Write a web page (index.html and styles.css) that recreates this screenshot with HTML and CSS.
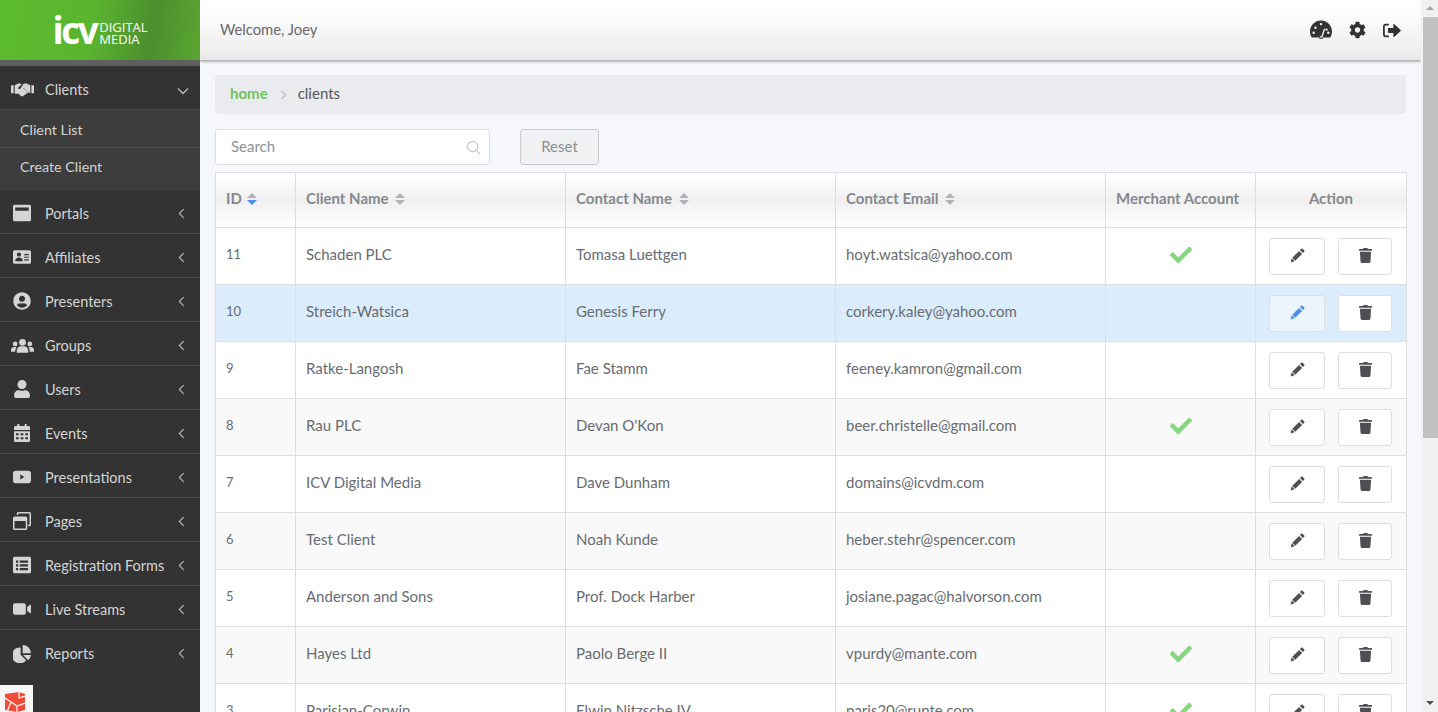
FILE: index.html
```html
<!DOCTYPE html>
<html lang="en">
    <head>
        <meta charset="UTF-8">
        <title>Clients - ICV Digital Media</title>
        <meta content="width=device-width" name="viewport">
        <link rel="stylesheet" href="styles.css">
    </head>
    <body>
        <svg class="defs" aria-hidden="true">
            <symbol id="i-hands" viewBox="0 0 44 28">
                <path d="M0 6h5v15H0zM39 6h5v15h-5z"/>
                <path d="M7 6l8-4 6 2-7 6c-1 2 1 4 3 3l5-3 10 9c1 2-1 3-3 3l-2 2-2 1-2 2h-3l-6-5H7z"/>
                <path d="M24 3l5-1 8 4v14h-3l-10-9-5 3c-1 0-2-1-1-2z"/>
            </symbol>
            <symbol id="i-window" viewBox="0 0 24 24">
                <path fill-rule="evenodd" d="M2 1h20a2 2 0 0 1 2 2v18a2 2 0 0 1-2 2H2a2 2 0 0 1-2-2V3a2 2 0 0 1 2-2zm1 3.500v4.500h18V4.500z"/>
            </symbol>
            <symbol id="i-card" viewBox="0 0 24 20">
                <path fill-rule="evenodd" d="M2 1h20a2 2 0 0 1 2 2v14a2 2 0 0 1-2 2H2a2 2 0 0 1-2-2V3a2 2 0 0 1 2-2zm6 3a2.800 2.800 0 1 0 0 5.600A2.800 2.800 0 0 0 8 4zM3 15.500h10c0-3-2-4.700-5-4.700s-5 1.700-5 4.700zM15 6v1.600h6V6zm0 3.500v1.600h6V9.500zm0 3.500v1.600h6V13z"/>
            </symbol>
            <symbol id="i-user-circle" viewBox="0 0 496 512">
                <path d="M248 8C111 8 0 119 0 256s111 248 248 248 248-111 248-248S385 8 248 8zm0 96c48.600 0 88 39.400 88 88s-39.400 88-88 88-88-39.400-88-88 39.400-88 88-88zm0 344c-58.700 0-111.300-26.600-146.500-68.200 18.800-35.400 55.600-59.800 98.500-59.800 2.400 0 4.800.400 7.100 1.100 13 4.200 26.600 6.900 40.900 6.900 14.300 0 28-2.700 40.900-6.900 2.300-.700 4.700-1.100 7.100-1.100 42.900 0 79.700 24.400 98.500 59.800C359.300 421.400 306.700 448 248 448z"/>
            </symbol>
            <symbol id="i-users" viewBox="0 0 44 28">
                <circle cx="22" cy="8" r="6.500"/>
                <path d="M11 28v-4c0-5 4-8.500 8-8.500h6c4 0 8 3.500 8 8.500v4z"/>
                <circle cx="8" cy="11" r="4.500"/>
                <circle cx="36" cy="11" r="4.500"/>
                <path d="M0 26v-3c0-4 3-6 5-6h6c-2 2-3 5-3 9zM44 26v-3c0-4-3-6-5-6h-6c2 2 3 5 3 9z"/>
            </symbol>
            <symbol id="i-user" viewBox="0 0 448 512">
                <path d="M224 256c70.700 0 128-57.300 128-128S294.700 0 224 0 96 57.300 96 128s57.300 128 128 128zm89.600 32h-16.700c-22.200 10.200-46.900 16-72.900 16s-50.600-5.800-72.900-16h-16.700C60.200 288 0 348.200 0 422.400V464c0 26.500 21.500 48 48 48h352c26.500 0 48-21.500 48-48v-41.600c0-74.200-60.200-134.400-134.400-134.400z"/>
            </symbol>
            <symbol id="i-calendar" viewBox="0 0 24 27">
                <path fill-rule="evenodd" d="M5 0h3v3h8V0h3v3h3a2 2 0 0 1 2 2v4H0V5a2 2 0 0 1 2-2h3zM0 11h24v14a2 2 0 0 1-2 2H2a2 2 0 0 1-2-2zm3 3v3h4v-3zm7 0v3h4v-3zm7 0v3h4v-3zM3 20v3h4v-3zm7 0v3h4v-3zm7 0v3h4v-3z"/>
            </symbol>
            <symbol id="i-youtube" viewBox="0 0 26 20">
                <path fill-rule="evenodd" d="M4 1h18a4 4 0 0 1 4 4v10a4 4 0 0 1-4 4H4a4 4 0 0 1-4-4V5a4 4 0 0 1 4-4zm6.500 5.500v7l6-3.500z"/>
            </symbol>
            <symbol id="i-pages" viewBox="0 0 24 24">
                <path fill-rule="evenodd" d="M7 0h15a2 2 0 0 1 2 2v15a2 2 0 0 1-2 2h-2v-2h2V2H7v2H5V2a2 2 0 0 1 2-2zM2 6h15a2 2 0 0 1 2 2v14a2 2 0 0 1-2 2H2a2 2 0 0 1-2-2V8a2 2 0 0 1 2-2zm0 6v10h15V12z"/>
            </symbol>
            <symbol id="i-list" viewBox="0 0 24 24">
                <path fill-rule="evenodd" d="M2 1h20a2 2 0 0 1 2 2v18a2 2 0 0 1-2 2H2a2 2 0 0 1-2-2V3a2 2 0 0 1 2-2zm2 5v3h3V6zm5 0v3h11V6zm-5 5v3h3v-3zm5 0v3h11v-3zm-5 5v3h3v-3zm5 0v3h11v-3z"/>
            </symbol>
            <symbol id="i-video" viewBox="0 0 28 20">
                <path d="M3 1h14a3 3 0 0 1 3 3v12a3 3 0 0 1-3 3H3a3 3 0 0 1-3-3V4a3 3 0 0 1 3-3zM22 7l5-3.500c.5-.3 1 0 1 .6v11.800c0 .6-.5.9-1 .6L22 13z"/>
            </symbol>
            <symbol id="i-pie" viewBox="0 0 26 26">
                <path d="M11 3.500V14l8 8a11.500 11.500 0 1 1-8-18.500z"/>
                <path d="M14 0a12 12 0 0 1 12 12H14z"/>
                <path d="M14.500 14.500H26a12 12 0 0 1-4 7.500z"/>
            </symbol>
            <symbol id="i-gauge" viewBox="0 0 576 512">
                <path fill-rule="evenodd" d="M288 32C129 32 0 161 0 320c0 53 14 102 39 145 6 9 16 15 27 15h444c11 0 21-6 27-15 25-43 39-92 39-145 0-159-129-288-288-288zm0 64a32 32 0 1 1 0 64 32 32 0 0 1 0-64zM96 384a32 32 0 1 1 0-64 32 32 0 0 1 0 64zm48-128a32 32 0 1 1 0-64 32 32 0 0 1 0 64zm246 27l-62 183c12 11 20 27 18 44H238c-3-38 27-69 62-69l62-185c3-8 11-12 19-9 7 3 11 11 9 19zm16 5a32 32 0 0 1 24-47 32 32 0 0 1 14 62zM480 384a32 32 0 1 1 0-64 32 32 0 0 1 0 64z"/>
            </symbol>
            <symbol id="i-cog" viewBox="0 0 512 512">
                <path d="M487.400 315.700l-42.600-24.600c4.300-23.200 4.300-47 0-70.200l42.600-24.600c4.900-2.800 7.100-8.600 5.500-14-11.100-35.600-30-67.800-54.700-94.600-3.800-4.100-10-5.100-14.800-2.300L380.800 110c-17.900-15.400-38.500-27.300-60.800-35.100V25.800c0-5.600-3.900-10.500-9.400-11.700-36.700-8.200-74.300-7.800-109.200 0-5.500 1.200-9.400 6.100-9.400 11.700V75c-22.200 7.900-42.800 19.800-60.800 35.100L88.700 85.500c-4.900-2.800-11-1.900-14.800 2.300-24.700 26.700-43.600 58.900-54.700 94.600-1.700 5.400.600 11.200 5.500 14L67.300 221c-4.300 23.200-4.300 47 0 70.200l-42.600 24.600c-4.900 2.800-7.100 8.600-5.500 14 11.100 35.600 30 67.800 54.700 94.600 3.800 4.100 10 5.100 14.800 2.300l42.600-24.600c17.900 15.400 38.500 27.300 60.800 35.100v49.200c0 5.600 3.900 10.500 9.400 11.700 36.700 8.200 74.300 7.800 109.200 0 5.500-1.200 9.400-6.100 9.400-11.700v-49.200c22.200-7.900 42.800-19.800 60.800-35.100l42.600 24.600c4.900 2.800 11 1.900 14.800-2.300 24.700-26.700 43.600-58.900 54.700-94.600 1.500-5.500-.700-11.300-5.600-14.100zM256 336c-44.100 0-80-35.900-80-80s35.900-80 80-80 80 35.900 80 80-35.900 80-80 80z"/>
            </symbol>
            <symbol id="i-signout" viewBox="0 0 20 16">
                <path d="M6.500 1.500H3A2 2 0 0 0 1 3.500v9a2 2 0 0 0 2 2h3.500" fill="none" stroke="currentColor" stroke-width="2"/>
                <path d="M5.500 5.300h6V1.200c0-.5.5-.7.900-.4L19.600 7.500c.3.300.3.700 0 1l-7.200 6.700c-.4.300-.9.100-.9-.4v-4.100h-6z"/>
            </symbol>
            <symbol id="i-pencil" viewBox="0 0 16 16">
                <path d="M12 0.800c.4-.4 1-.4 1.400 0l1.800 1.800c.4.400.4 1 0 1.400l-1.400 1.400-3.200-3.200zM9.700 3.100l3.200 3.200-7.300 7.300-3.200-3.200zM1.800 11l3.200 3.200-4.400 1.200z"/>
            </symbol>
            <symbol id="i-trash" viewBox="0 0 448 512">
                <path d="M432 32H312l-9.400-18.700A24 24 0 0 0 281.100 0H166.800a23.720 23.720 0 0 0-21.400 13.300L136 32H16A16 16 0 0 0 0 48v32a16 16 0 0 0 16 16h416a16 16 0 0 0 16-16V48a16 16 0 0 0-16-16zM53.200 467a48 48 0 0 0 47.900 45h245.800a48 48 0 0 0 47.900-45L416 128H32z"/>
            </symbol>
            <symbol id="i-check" viewBox="0 0 512 512">
                <path d="M173.898 439.404l-166.400-166.400c-9.997-9.997-9.997-26.206 0-36.204l36.203-36.204c9.997-9.998 26.207-9.998 36.204 0L192 312.690 432.095 72.596c9.997-9.997 26.207-9.997 36.204 0l36.203 36.204c9.997 9.997 9.997 26.206 0 36.204l-294.400 294.401c-9.998 9.997-26.207 9.997-36.204-.001z"/>
            </symbol>
            <symbol id="i-chev-left" viewBox="0 0 8 12">
                <path d="M6.500 1L1.500 6l5 5" fill="none" stroke="currentColor" stroke-width="1.300"/>
            </symbol>
            <symbol id="i-chev-down" viewBox="0 0 12 8">
                <path d="M1 1.500l5 5 5-5" fill="none" stroke="currentColor" stroke-width="1.300"/>
            </symbol>
        </svg>

        <div class="app">
            <aside class="sidebar">
                <div class="brand">
                    <span class="brand-mark">icv</span>
                    <span class="brand-name">DIGITAL<br>MEDIA</span>
                </div>
                <nav class="nav">
                    <a class="nav-item nav-open" href="#">
                        <span class="nav-icon"><svg class="ic-wide"><use href="#i-hands"/></svg></span>
                        <span class="nav-label">Clients</span>
                        <svg class="caret-down"><use href="#i-chev-down"/></svg>
                    </a>
                    <div class="subnav">
                        <a class="sub-item" href="#">Client List</a>
                        <a class="sub-item" href="#">Create Client</a>
                    </div>
                    <a class="nav-item" href="#">
                        <span class="nav-icon"><svg class="ic-box"><use href="#i-window"/></svg></span>
                        <span class="nav-label">Portals</span>
                        <svg class="caret"><use href="#i-chev-left"/></svg>
                    </a>
                    <a class="nav-item" href="#">
                        <span class="nav-icon"><svg class="ic-box"><use href="#i-card"/></svg></span>
                        <span class="nav-label">Affiliates</span>
                        <svg class="caret"><use href="#i-chev-left"/></svg>
                    </a>
                    <a class="nav-item" href="#">
                        <span class="nav-icon"><svg class="ic-box"><use href="#i-user-circle"/></svg></span>
                        <span class="nav-label">Presenters</span>
                        <svg class="caret"><use href="#i-chev-left"/></svg>
                    </a>
                    <a class="nav-item" href="#">
                        <span class="nav-icon"><svg class="ic-wide"><use href="#i-users"/></svg></span>
                        <span class="nav-label">Groups</span>
                        <svg class="caret"><use href="#i-chev-left"/></svg>
                    </a>
                    <a class="nav-item" href="#">
                        <span class="nav-icon"><svg class="ic-box"><use href="#i-user"/></svg></span>
                        <span class="nav-label">Users</span>
                        <svg class="caret"><use href="#i-chev-left"/></svg>
                    </a>
                    <a class="nav-item" href="#">
                        <span class="nav-icon"><svg class="ic-box"><use href="#i-calendar"/></svg></span>
                        <span class="nav-label">Events</span>
                        <svg class="caret"><use href="#i-chev-left"/></svg>
                    </a>
                    <a class="nav-item" href="#">
                        <span class="nav-icon"><svg class="ic-box"><use href="#i-youtube"/></svg></span>
                        <span class="nav-label">Presentations</span>
                        <svg class="caret"><use href="#i-chev-left"/></svg>
                    </a>
                    <a class="nav-item" href="#">
                        <span class="nav-icon"><svg class="ic-box"><use href="#i-pages"/></svg></span>
                        <span class="nav-label">Pages</span>
                        <svg class="caret"><use href="#i-chev-left"/></svg>
                    </a>
                    <a class="nav-item" href="#">
                        <span class="nav-icon"><svg class="ic-box"><use href="#i-list"/></svg></span>
                        <span class="nav-label">Registration Forms</span>
                        <svg class="caret"><use href="#i-chev-left"/></svg>
                    </a>
                    <a class="nav-item" href="#">
                        <span class="nav-icon"><svg class="ic-box"><use href="#i-video"/></svg></span>
                        <span class="nav-label">Live Streams</span>
                        <svg class="caret"><use href="#i-chev-left"/></svg>
                    </a>
                    <a class="nav-item nav-last" href="#">
                        <span class="nav-icon"><svg class="ic-box"><use href="#i-pie"/></svg></span>
                        <span class="nav-label">Reports</span>
                        <svg class="caret"><use href="#i-chev-left"/></svg>
                    </a>
                </nav>
                <div class="debug-badge">
                    <svg viewBox="0 0 20 20">
                        <path fill="#ef4b36" d="M0 2l14-2 6 2v16l-8 2-12-2z"/>
                        <path fill="none" stroke="#fff" stroke-width="1.200" d="M0 6l12 8 8-3M14 0v6l6-2M12 14v6M6 10L2 20"/>
                    </svg>
                </div>
            </aside>

            <div class="main">
                <header class="topbar">
                    <span class="welcome">Welcome, Joey</span>
                    <div class="topbar-icons">
                        <svg class="top-gauge"><use href="#i-gauge"/></svg>
                        <svg class="top-cog"><use href="#i-cog"/></svg>
                        <svg class="top-out"><use href="#i-signout"/></svg>
                    </div>
                </header>

                <div class="content">
                    <div class="breadcrumb">
                        <a href="#">home</a>
                        <svg class="crumb-sep" viewBox="0 0 8 12"><path d="M1.500 1l5 5-5 5" fill="none" stroke="currentColor" stroke-width="1.300"/></svg>
                        <span>clients</span>
                    </div>

                    <div class="filters">
                        <div class="search">
                            <input type="text" placeholder="Search">
                            <svg viewBox="0 0 16 16"><circle cx="7" cy="7" r="5.500" fill="none" stroke="currentColor"/><path d="M11 11l4 4" stroke="currentColor"/></svg>
                        </div>
                        <button class="reset" type="button">Reset</button>
                    </div>

                    <table class="grid">
                        <colgroup>
                            <col class="col-id"><col class="col-text"><col class="col-text"><col class="col-text"><col class="col-merchant"><col class="col-action">
                        </colgroup>
                        <thead>
                            <tr>
                                <th>ID <span class="sort sort-asc"></span></th>
                                <th>Client Name <span class="sort"></span></th>
                                <th>Contact Name <span class="sort"></span></th>
                                <th>Contact Email <span class="sort"></span></th>
                                <th>Merchant Account</th>
                                <th class="center">Action</th>
                            </tr>
                        </thead>
                        <tbody>
                            <tr>
                                <td class="num">11</td><td>Schaden PLC</td><td>Tomasa Luettgen</td><td>hoyt.watsica@yahoo.com</td>
                                <td class="tick"><svg><use href="#i-check"/></svg></td>
                                <td class="actions"><button class="btn-edit"><svg><use href="#i-pencil"/></svg></button><button class="btn-del"><svg><use href="#i-trash"/></svg></button></td>
                            </tr>
                            <tr class="active">
                                <td class="num">10</td><td>Streich-Watsica</td><td>Genesis Ferry</td><td>corkery.kaley@yahoo.com</td>
                                <td class="tick"></td>
                                <td class="actions"><button class="btn-edit"><svg><use href="#i-pencil"/></svg></button><button class="btn-del"><svg><use href="#i-trash"/></svg></button></td>
                            </tr>
                            <tr>
                                <td class="num">9</td><td>Ratke-Langosh</td><td>Fae Stamm</td><td>feeney.kamron@gmail.com</td>
                                <td class="tick"></td>
                                <td class="actions"><button class="btn-edit"><svg><use href="#i-pencil"/></svg></button><button class="btn-del"><svg><use href="#i-trash"/></svg></button></td>
                            </tr>
                            <tr>
                                <td class="num">8</td><td>Rau PLC</td><td>Devan O'Kon</td><td>beer.christelle@gmail.com</td>
                                <td class="tick"><svg><use href="#i-check"/></svg></td>
                                <td class="actions"><button class="btn-edit"><svg><use href="#i-pencil"/></svg></button><button class="btn-del"><svg><use href="#i-trash"/></svg></button></td>
                            </tr>
                            <tr>
                                <td class="num">7</td><td>ICV Digital Media</td><td>Dave Dunham</td><td>domains@icvdm.com</td>
                                <td class="tick"></td>
                                <td class="actions"><button class="btn-edit"><svg><use href="#i-pencil"/></svg></button><button class="btn-del"><svg><use href="#i-trash"/></svg></button></td>
                            </tr>
                            <tr>
                                <td class="num">6</td><td>Test Client</td><td>Noah Kunde</td><td>heber.stehr@spencer.com</td>
                                <td class="tick"></td>
                                <td class="actions"><button class="btn-edit"><svg><use href="#i-pencil"/></svg></button><button class="btn-del"><svg><use href="#i-trash"/></svg></button></td>
                            </tr>
                            <tr>
                                <td class="num">5</td><td>Anderson and Sons</td><td>Prof. Dock Harber</td><td>josiane.pagac@halvorson.com</td>
                                <td class="tick"></td>
                                <td class="actions"><button class="btn-edit"><svg><use href="#i-pencil"/></svg></button><button class="btn-del"><svg><use href="#i-trash"/></svg></button></td>
                            </tr>
                            <tr>
                                <td class="num">4</td><td>Hayes Ltd</td><td>Paolo Berge II</td><td>vpurdy@mante.com</td>
                                <td class="tick"><svg><use href="#i-check"/></svg></td>
                                <td class="actions"><button class="btn-edit"><svg><use href="#i-pencil"/></svg></button><button class="btn-del"><svg><use href="#i-trash"/></svg></button></td>
                            </tr>
                            <tr>
                                <td class="num">3</td><td>Parisian-Corwin</td><td>Elwin Nitzsche IV</td><td>paris20@runte.com</td>
                                <td class="tick"><svg><use href="#i-check"/></svg></td>
                                <td class="actions"><button class="btn-edit"><svg><use href="#i-pencil"/></svg></button><button class="btn-del"><svg><use href="#i-trash"/></svg></button></td>
                            </tr>
                        </tbody>
                    </table>
                </div>
            </div>

            <div class="scrollbar">
                <span class="arrow-up"></span>
                <div class="scroll-track"><div class="scroll-thumb"></div></div>
                <span class="arrow-down"></span>
            </div>
        </div>
    </body>
</html>
```

FILE: styles.css
```css
* {
    box-sizing: border-box;
    padding: 0;
    margin: 0
}

html,body {
    height: 100%;
    overflow: hidden
}

body {
    font-family: "Lato", "Open Sans", sans-serif;
    font-size: 15px;
    color: #5c6066;
    background: #f5f7fa
}

a {
    text-decoration: none;
    color: inherit
}

svg {
    fill: currentColor
}

.defs {
    display: none
}

.app {
    display: flex;
    height: 100%
}

/* sidebar */
.sidebar {
    position: relative;
    flex: 0 0 200px;
    background: #333;
    color: #d4d4d4;
    overflow: hidden
}

.brand {
    height: 60px;
    display: flex;
    align-items: center;
    justify-content: center;
    gap: 3px;
    color: #fff;
    background: linear-gradient(100deg, #5dbb2e 0%, #5ab52e 45%, #4c8f2e 75%, #5aa631 100%)
}

.brand-mark {
    font-family: "Open Sans", sans-serif;
    font-weight: 700;
    font-size: 37px;
    line-height: 1;
    letter-spacing: -2.500px;
    margin-top: -1px
}

.brand-name {
    font-family: "Open Sans", sans-serif;
    font-size: 13px;
    line-height: 12px;
    margin-top: 6px
}

.nav {
    border-top: 6px solid #5f5f5f;
    font-size: 14.500px
}

.nav-item {
    display: flex;
    align-items: center;
    height: 44px;
    padding-top: 3px;
    border-bottom: 1px solid #4a4a4a
}

.nav-last {
    border-bottom: none
}

.nav-icon {
    flex: 0 0 45px;
    display: flex;
    justify-content: center;
    padding-right: 1px
}

.ic-box {
    width: 18px;
    height: 18px
}

.ic-wide {
    width: 23px;
    height: 15px
}

.nav-label {
    flex: 1;
    white-space: nowrap
}

.caret {
    width: 7px;
    height: 11px;
    margin-right: 15px;
    color: #bdbdbd
}

.caret-down {
    width: 12px;
    height: 8px;
    margin-right: 11px;
    margin-top: 3px;
    color: #bdbdbd
}

.subnav {
    background: #3d3d3d;
    font-size: 14.300px
}

.sub-item {
    display: flex;
    align-items: center;
    height: 38px;
    padding-left: 20px;
    padding-top: 2px;
    border-bottom: 1px solid #4a4a4a
}

.sub-item:last-child {
    height: 42px;
    border-bottom: none;
    padding-top: 0;
    padding-bottom: 5px
}

.debug-badge {
    position: absolute;
    left: 0;
    bottom: 0;
    width: 33px;
    height: 27px;
    background: #f7f7f7;
    padding: 7px 8px 0 5px
}

.debug-badge svg {
    display: block;
    width: 20px;
    height: 20px
}

/* top bar */
.main {
    flex: 1;
    min-width: 0;
    overflow: hidden
}

.topbar {
    position: relative;
    height: 60px;
    display: flex;
    align-items: center;
    justify-content: space-between;
    padding: 0 20px;
    background: linear-gradient(#fff, #fafafa 35%, #e9e9e9);
    box-shadow: 0 2px 2px rgba(0,0,0,.28)
}

.welcome {
    color: #6a6a6a;
    font-size: 14.800px;
    padding-bottom: 2px
}

.topbar-icons {
    display: flex;
    align-items: center;
    color: #333
}

.top-gauge {
    width: 22px;
    height: 20px;
    margin-bottom: 2px
}

.top-cog {
    width: 17px;
    height: 18px;
    margin-left: 17px
}

.top-out {
    width: 18px;
    height: 15px;
    margin-left: 17px
}

/* content */
.content {
    padding: 15px 15px 0
}

.breadcrumb {
    display: flex;
    align-items: center;
    height: 39px;
    padding: 0 15px 3px;
    background: #e9ebee;
    border-radius: 3px;
    color: #54585e
}

.breadcrumb a {
    color: #72c35a;
    font-weight: 700
}

.crumb-sep {
    width: 7px;
    height: 10px;
    margin: 3px 11px 0 12px;
    color: #b5b8bc
}

.filters {
    display: flex;
    align-items: center;
    margin-top: 15px;
    margin-bottom: 7px
}

.search {
    position: relative;
    width: 275px;
    color: #aeb2b6
}

.search input {
    display: block;
    width: 100%;
    height: 36px;
    padding: 0 15px 2px;
    border: 1px solid #dcdee2;
    border-radius: 3px;
    background: #fff;
    font: inherit
}

.search input::placeholder {
    color: #8e9297;
    opacity: 1
}

.search svg {
    position: absolute;
    right: 9px;
    top: 11px;
    width: 15px;
    height: 15px
}

.reset {
    width: 79px;
    height: 36px;
    margin-left: 30px;
    padding-bottom: 2px;
    border: 1px solid #c9cccf;
    border-radius: 3px;
    background: #eff1f3;
    color: #8b8f94;
    font: inherit
}

/* table */
.grid {
    width: 1191px;
    table-layout: fixed;
    border-collapse: collapse;
    background: #fff
}

.col-id {
    width: 80px
}

.col-text {
    width: 270px
}

.col-merchant {
    width: 150px
}

.col-action {
    width: 151px
}

.grid th,.grid td {
    border: 1px solid #dcdee2;
    padding: 0 10px 5px;
    text-align: left;
    white-space: nowrap
}

.grid th {
    height: 55px;
    font-weight: 700;
    color: #85898f;
    background: linear-gradient(#fff, #f0f0f0 50%, #fff)
}

.grid th.center {
    text-align: center
}

.grid td {
    height: 57px;
    color: #686c72
}

.grid td.num {
    font-size: 13px
}

.grid tbody tr:nth-child(even) td {
    background: #f9f9f9
}

.grid tbody tr.active td {
    background: #dbedfc
}

.sort {
    display: inline-block;
    position: relative;
    width: 10px;
    height: 12px;
    margin-left: 3px;
    vertical-align: -1px
}

.sort::before,.sort::after {
    content: "";
    position: absolute;
    left: 0;
    border-left: 5px solid transparent;
    border-right: 5px solid transparent
}

.sort::before {
    top: 0;
    border-bottom: 5px solid #b0b3b8
}

.sort::after {
    bottom: 0;
    border-top: 5px solid #b0b3b8
}

.sort-asc {
    margin-left: 1px
}

.sort-asc::after {
    border-top-color: #4a8fe8
}

.grid td.tick {
    padding: 0 0 3px;
    color: #86d57f
}

.tick svg {
    display: block;
    width: 22px;
    height: 22px;
    margin: 0 auto
}

.grid td.actions {
    padding: 0 0 0 13px
}

.actions button {
    display: inline-flex;
    align-items: center;
    justify-content: center;
    height: 37px;
    padding-bottom: 1px;
    border: 1px solid #dcdee2;
    border-radius: 3px;
    background: #fff;
    color: #4e4f52;
    vertical-align: middle
}

.btn-edit {
    width: 56px;
    margin-right: 13px
}

.btn-del {
    width: 54px
}

.btn-edit svg {
    width: 15px;
    height: 15px
}

.btn-del svg {
    width: 13px;
    height: 15px
}

.active .btn-edit {
    background: #ecf5fd;
    color: #4a8fe8
}

/* page scrollbar, drawn because the window shows it */
.scrollbar {
    flex: 0 0 17px;
    display: flex;
    flex-direction: column;
    background: #f1f1f1
}

.scroll-track {
    flex: 1
}

.scroll-thumb {
    height: 421px;
    margin-left: 2px;
    background: #c1c1c1
}

.arrow-up,.arrow-down {
    display: block;
    height: 17px;
    position: relative
}

.arrow-up::before,.arrow-down::before {
    content: "";
    position: absolute;
    left: 5px;
    top: 6px;
    border-left: 4px solid transparent;
    border-right: 4px solid transparent
}

.arrow-up::before {
    border-bottom: 4px solid #a3a3a3
}

.arrow-down::before {
    border-top: 4px solid #505050
}
```
